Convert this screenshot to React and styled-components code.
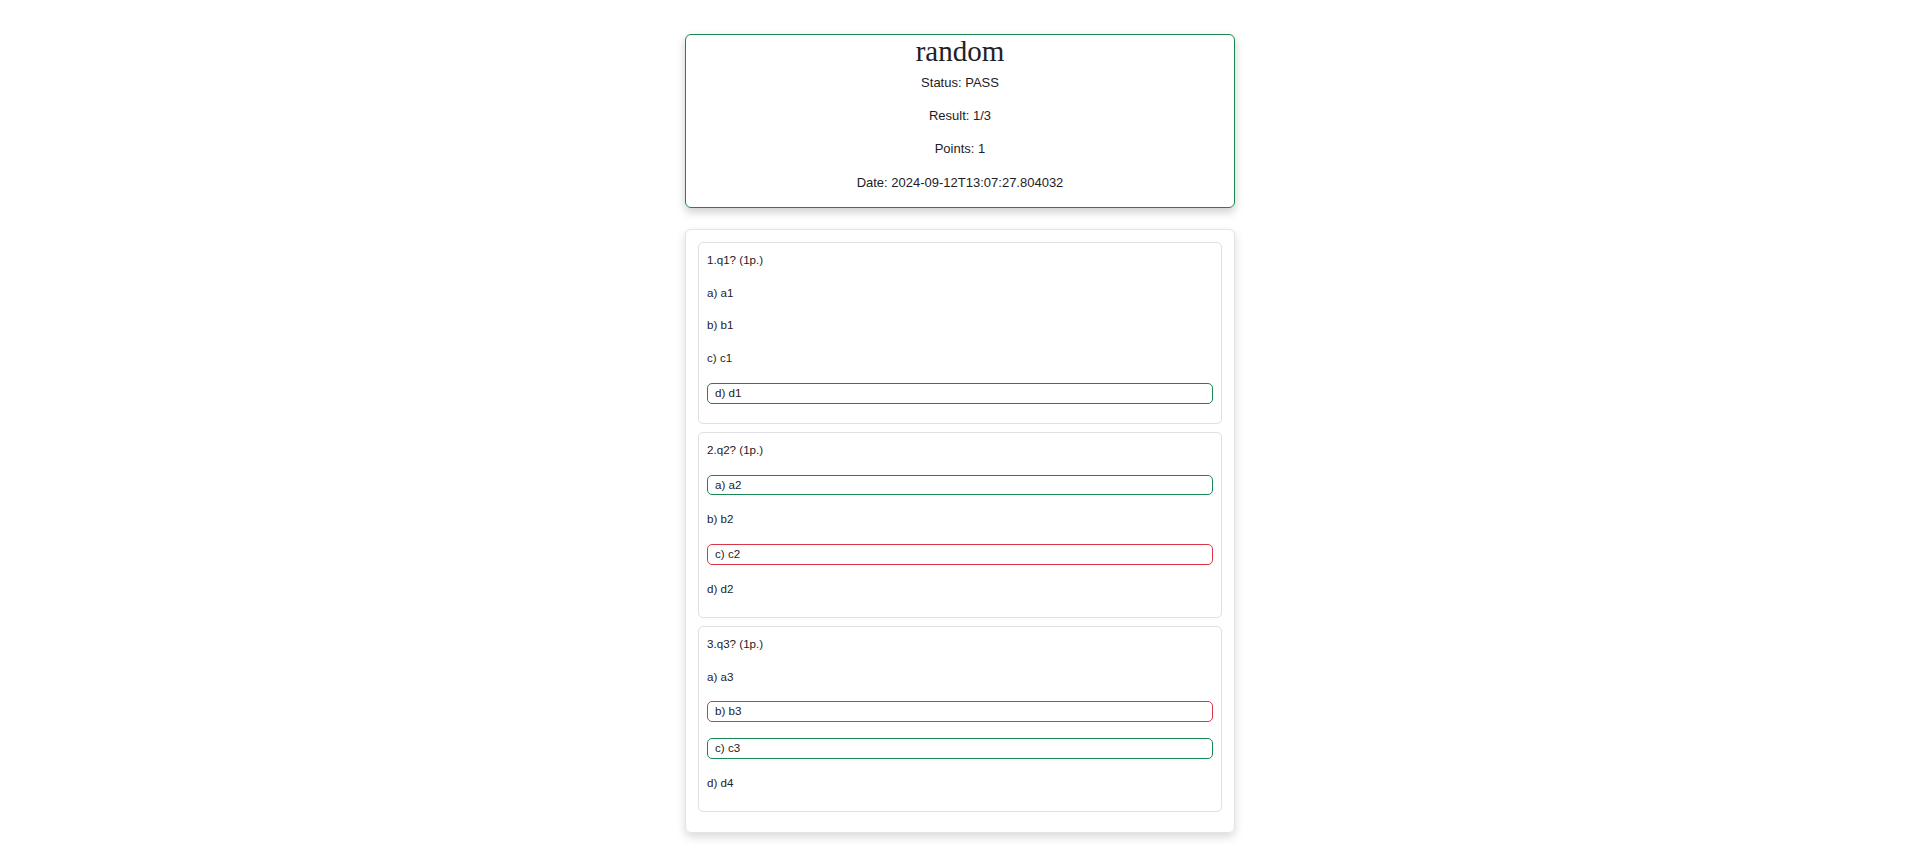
import React from "react";
import styled, { createGlobalStyle } from "styled-components";

const quiz = {
  name: "random",
  status: "PASS",
  result: "1/3",
  points: 1,
  date: "2024-09-12T13:07:27.804032",
  questions: [
    {
      text: "q1?",
      points: 1,
      answers: [
        { label: "a", text: "a1" },
        { label: "b", text: "b1" },
        { label: "c", text: "c1" },
        { label: "d", text: "d1", mark: "correct" },
      ],
    },
    {
      text: "q2?",
      points: 1,
      answers: [
        { label: "a", text: "a2", mark: "correct" },
        { label: "b", text: "b2" },
        { label: "c", text: "c2", mark: "wrong" },
        { label: "d", text: "d2" },
      ],
    },
    {
      text: "q3?",
      points: 1,
      answers: [
        { label: "a", text: "a3" },
        { label: "b", text: "b3", mark: "wrong" },
        { label: "c", text: "c3", mark: "correct" },
        { label: "d", text: "d4" },
      ],
    },
  ],
};

export default function App() {
  return (
    <>
      <GlobalStyle />
      <TopBar />
      <Page>
        <SummaryCard>
          <Title>{quiz.name}</Title>
          <SummaryLine>Status: {quiz.status}</SummaryLine>
          <SummaryLine>Result: {quiz.result}</SummaryLine>
          <SummaryLine>Points: {quiz.points}</SummaryLine>
          <SummaryLine>Date: {quiz.date}</SummaryLine>
        </SummaryCard>
        <QuestionsCard>
          {quiz.questions.map((q, i) => (
            <QuestionBox key={i}>
              <Line>
                {i + 1}.{q.text} ({q.points}p.)
              </Line>
              {q.answers.map((a) =>
                a.mark ? (
                  <MarkedAnswer key={a.label} $mark={a.mark}>
                    {a.label}) {a.text}
                  </MarkedAnswer>
                ) : (
                  <Line key={a.label}>
                    {a.label}) {a.text}
                  </Line>
                )
              )}
            </QuestionBox>
          ))}
        </QuestionsCard>
      </Page>
    </>
  );
}

const GlobalStyle = createGlobalStyle`
  body {
    margin: 0;
    background: #fff;
    color: #1e2125;
    font-family: "Liberation Sans", Arial, sans-serif;
  }
`;

const TopBar = styled.header`
  height: 0;
  box-shadow: 0 1px 10px rgba(0, 0, 0, 0.18);
`;

const Page = styled.main`
  display: flex;
  flex-direction: column;
  align-items: center;
  padding: 34px 0 40px;
`;

const SummaryCard = styled.section`
  width: 550px;
  box-sizing: border-box;
  border: 1px solid #198754;
  border-radius: 6px;
  box-shadow: 0 4px 10px rgba(0, 0, 0, 0.2);
  text-align: center;
  display: flow-root;
`;

const Title = styled.h2`
  margin: 0 0 7px;
  font-family: "Liberation Serif", "Times New Roman", serif;
  font-size: 29px;
  font-weight: 400;
  line-height: 32px;
`;

const SummaryLine = styled.p`
  margin: 0 0 16px;
  font-size: 13px;
  line-height: 17.2px;
`;

const QuestionsCard = styled.section`
  width: 550px;
  box-sizing: border-box;
  margin-top: 21px;
  padding: 12px 12px 12px;
  border: 1px solid #e3e3e8;
  border-radius: 6px;
  box-shadow: 0 4px 10px rgba(0, 0, 0, 0.15);
`;

const QuestionBox = styled.div`
  margin-bottom: 8px;
  padding: 9px 8px 3px;
  border: 1px solid #e0e0e5;
  border-radius: 5px;
`;

const Line = styled.p`
  margin: 0 0 16px;
  font-size: 11.6px;
  line-height: 16.8px;
`;

const MarkedAnswer = styled(Line)`
  padding: 1px 7px;
  border: 1px solid ${(p) => (p.$mark === "correct" ? "#198754" : "#dc3545")};
  border-radius: 5px;
`;
